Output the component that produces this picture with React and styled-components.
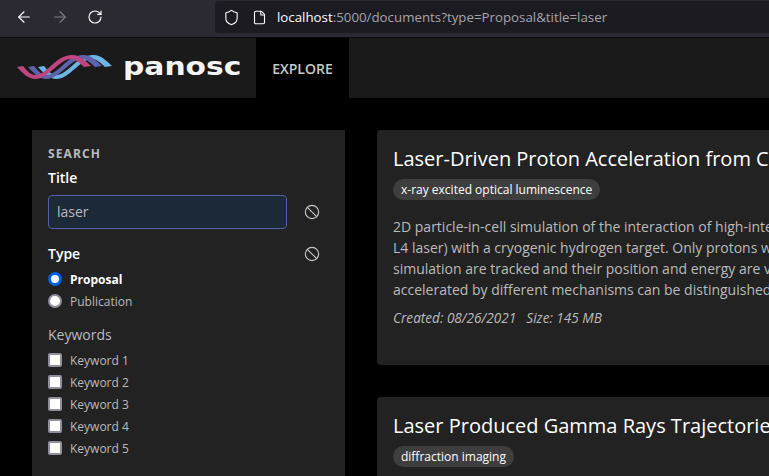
import React from "react";
import styled, { createGlobalStyle } from "styled-components";
import { ArrowLeft, ArrowRight, RotateCw, Shield, File, Ban } from "lucide-react";

const keywords = ["Keyword 1", "Keyword 2", "Keyword 3", "Keyword 4", "Keyword 5"];

const documents = [
  {
    title: "Laser-Driven Proton Acceleration from Cryogenic Hydrogen Targets",
    tag: "x-ray excited optical luminescence",
    lines: [
      "2D particle-in-cell simulation of the interaction of high-intensity laser pulses",
      "L4 laser) with a cryogenic hydrogen target. Only protons within the region of the",
      "simulation are tracked and their position and energy are visualised over time",
      "accelerated by different mechanisms can be distinguished in the resulting data.",
    ],
    created: "08/26/2021",
    size: "145 MB",
  },
  {
    title: "Laser Produced Gamma Rays Trajectories in Matter",
    tag: "diffraction imaging",
    lines: [],
  },
];

const ribbon =
  "M0 13L6 12C10 17 14 21 18 21C30 21 38 2 54 1C62 0 68 6 74 12L67 13C62 8 58 5 54 5C42 5 32 25 18 25C12 25 6 20 0 13Z";

const Logo = () => (
  <LogoMark width="96" height="26" viewBox="0 0 96 26">
    <path d={ribbon} fill="#6eb4e4" transform="translate(21 0)" />
    <path d={ribbon} fill="#5c63ab" transform="translate(11 0)" />
    <path d={ribbon} fill="#bd4580" />
  </LogoMark>
);

const App = () => {
  return (
    <>
      <GlobalStyle />
      <Toolbar>
        <NavButtons>
          <ArrowLeft size={18} strokeWidth={1.5} />
          <Disabled>
            <ArrowRight size={18} strokeWidth={1.5} />
          </Disabled>
          <RotateCw size={16} strokeWidth={1.7} />
        </NavButtons>
        <UrlBar>
          <Shield size={17} strokeWidth={1.6} />
          <File size={15} strokeWidth={1.8} />
          <Url>
            <b>localhost</b>:5000/documents?type=Proposal&amp;title=laser
          </Url>
        </UrlBar>
      </Toolbar>

      <Header>
        <Brand>
          <Logo />
          <BrandName>panosc</BrandName>
        </Brand>
        <Tab>EXPLORE</Tab>
      </Header>

      <Page>
        <Sidebar>
          <SearchTitle>SEARCH</SearchTitle>
          <FieldLabel>Title</FieldLabel>
          <InputRow>
            <TitleInput readOnly value="laser" />
            <ClearIcon />
          </InputRow>
          <TypeRow>
            <FieldLabel>Type</FieldLabel>
            <ClearIcon />
          </TypeRow>
          <Options>
            <Option>
              <Radio checked />
              <OptionLabel selected>Proposal</OptionLabel>
            </Option>
            <Option>
              <Radio />
              <OptionLabel>Publication</OptionLabel>
            </Option>
          </Options>
          <KeywordsTitle>Keywords</KeywordsTitle>
          {keywords.map((keyword) => (
            <Option key={keyword}>
              <Checkbox />
              <OptionLabel>{keyword}</OptionLabel>
            </Option>
          ))}
        </Sidebar>

        <Results>
          {documents.map((doc) => (
            <Card key={doc.title}>
              <CardTitle>{doc.title}</CardTitle>
              <Chip>{doc.tag}</Chip>
              <Summary>
                {doc.lines.map((line) => (
                  <SummaryLine key={line}>{line}</SummaryLine>
                ))}
              </Summary>
              {doc.created && (
                <Meta>
                  <span>Created: {doc.created}</span>
                  <span>Size: {doc.size}</span>
                </Meta>
              )}
            </Card>
          ))}
        </Results>
      </Page>
    </>
  );
};

export default App;

const GlobalStyle = createGlobalStyle`
  html, body {
    margin: 0;
    height: 476px;
    overflow: hidden;
    background: #000;
    font-family: "Open Sans", sans-serif;
  }
`;

const Toolbar = styled.div`
  height: 38px;
  box-sizing: border-box;
  padding: 1px 0 4px;
  display: flex;
  background: #2b2a33;
  color: #fbfbfe;
  border-bottom: 1px solid #0c0c0d;
`;

const NavButtons = styled.div`
  width: 215px;
  padding-left: 15px;
  box-sizing: border-box;
  display: flex;
  align-items: center;
  gap: 18px;
`;

const Disabled = styled.span`
  display: flex;
  opacity: 0.4;
`;

const UrlBar = styled.div`
  flex: 1;
  display: flex;
  align-items: center;
  gap: 12px;
  padding-left: 8px;
  background: #1c1b22;
  border-radius: 4px 0 0 4px;
`;

const Url = styled.div`
  font-size: 13.3px;
  color: #a5a4ab;
  margin-left: -2px;

  b {
    font-weight: 400;
    color: #fbfbfe;
  }
`;

const Header = styled.div`
  height: 60px;
  display: flex;
  background: #1a1a1a;
`;

const Brand = styled.div`
  width: 256px;
  box-sizing: border-box;
  padding-left: 17px;
  display: flex;
  align-items: center;
  gap: 10px;
`;

const LogoMark = styled.svg`
  flex: none;
  margin-top: -3px;
`;

const BrandName = styled.div`
  font-family: "DejaVu Sans", sans-serif;
  font-size: 24px;
  font-weight: 700;
  color: #f4f4f4;
  transform: scaleX(1.24);
  transform-origin: left center;
  margin-top: -3px;
`;

const Tab = styled.div`
  width: 93px;
  display: flex;
  align-items: center;
  justify-content: center;
  background: #000;
  color: #c8c8c8;
  font-size: 14px;
  font-weight: 600;
`;

const Page = styled.div`
  display: grid;
  grid-template-columns: 313px 900px;
  gap: 32px;
  padding: 32px;
  align-items: start;
`;

const Sidebar = styled.div`
  height: 400px;
  padding: 16px;
  box-sizing: border-box;
  background: #222;
  color: #bbb;
`;

const SearchTitle = styled.div`
  font-size: 12px;
  line-height: 16px;
  font-weight: 700;
  letter-spacing: 1.1px;
  color: #bbb;
`;

const FieldLabel = styled.div`
  margin-top: 6px;
  font-size: 14px;
  line-height: 20px;
  font-weight: 600;
  color: #fff;
`;

const InputRow = styled.div`
  margin-top: 7px;
  display: flex;
  align-items: center;
  gap: 17px;
`;

const TitleInput = styled.input`
  width: 239px;
  height: 34px;
  box-sizing: border-box;
  padding: 0 8px 1px;
  background: #1c2936;
  border: 1px solid #5460a8;
  border-radius: 4px;
  outline: none;
  color: #bbb;
  font-family: inherit;
  font-size: 14px;
`;

const ClearIcon = styled(Ban).attrs({ size: 16, strokeWidth: 1.7 })`
  color: #c8c8c8;
  flex: none;
`;

const TypeRow = styled.div`
  width: 272px;
  height: 20px;
  margin-top: 15px;
  display: flex;
  align-items: center;
  justify-content: space-between;

  ${FieldLabel} {
    margin-top: 0;
  }
`;

const Options = styled.div`
  margin-top: 4px;
`;

const Option = styled.div`
  height: 22px;
  display: flex;
  align-items: center;
  gap: 8px;
`;

const Radio = styled.span`
  width: 14px;
  height: 14px;
  box-sizing: border-box;
  border-radius: 50%;
  background: #fff;
  border: ${({ checked }) => (checked ? "3.5px solid #0060df" : "2px solid #8f8f9d")};
`;

const Checkbox = styled.span`
  width: 14px;
  height: 14px;
  box-sizing: border-box;
  border-radius: 2px;
  background: #fff;
  border: 2px solid #8f8f9d;
`;

const OptionLabel = styled.span`
  font-size: 12px;
  color: ${({ selected }) => (selected ? "#fff" : "#bbb")};
  font-weight: ${({ selected }) => (selected ? 700 : 400)};
`;

const KeywordsTitle = styled.div`
  margin-top: 13px;
  margin-bottom: 4px;
  font-size: 14px;
  line-height: 20px;
  color: #bbb;
`;

const Results = styled.div`
  display: flex;
  flex-direction: column;
  gap: 32px;
`;

const Card = styled.div`
  min-height: 235px;
  box-sizing: border-box;
  padding: 15px 16px 16px;
  background: #222;
  border-radius: 4px;
`;

const CardTitle = styled.div`
  font-size: 20px;
  line-height: 28px;
  color: #fff;
  white-space: nowrap;
`;

const Chip = styled.div`
  display: inline-block;
  margin-top: 6px;
  padding: 0 8px;
  height: 21px;
  line-height: 21px;
  border-radius: 11px;
  background: #3e3e3e;
  color: #fff;
  font-size: 12px;
`;

const Summary = styled.div`
  margin-top: 16px;
  font-size: 14px;
  line-height: 21px;
  color: #bbb;
`;

const SummaryLine = styled.div`
  white-space: nowrap;
`;

const Meta = styled.div`
  margin-top: 9px;
  display: flex;
  gap: 10px;
  font-size: 13.6px;
  line-height: 18px;
  font-style: italic;
  color: #bbb;
`;
